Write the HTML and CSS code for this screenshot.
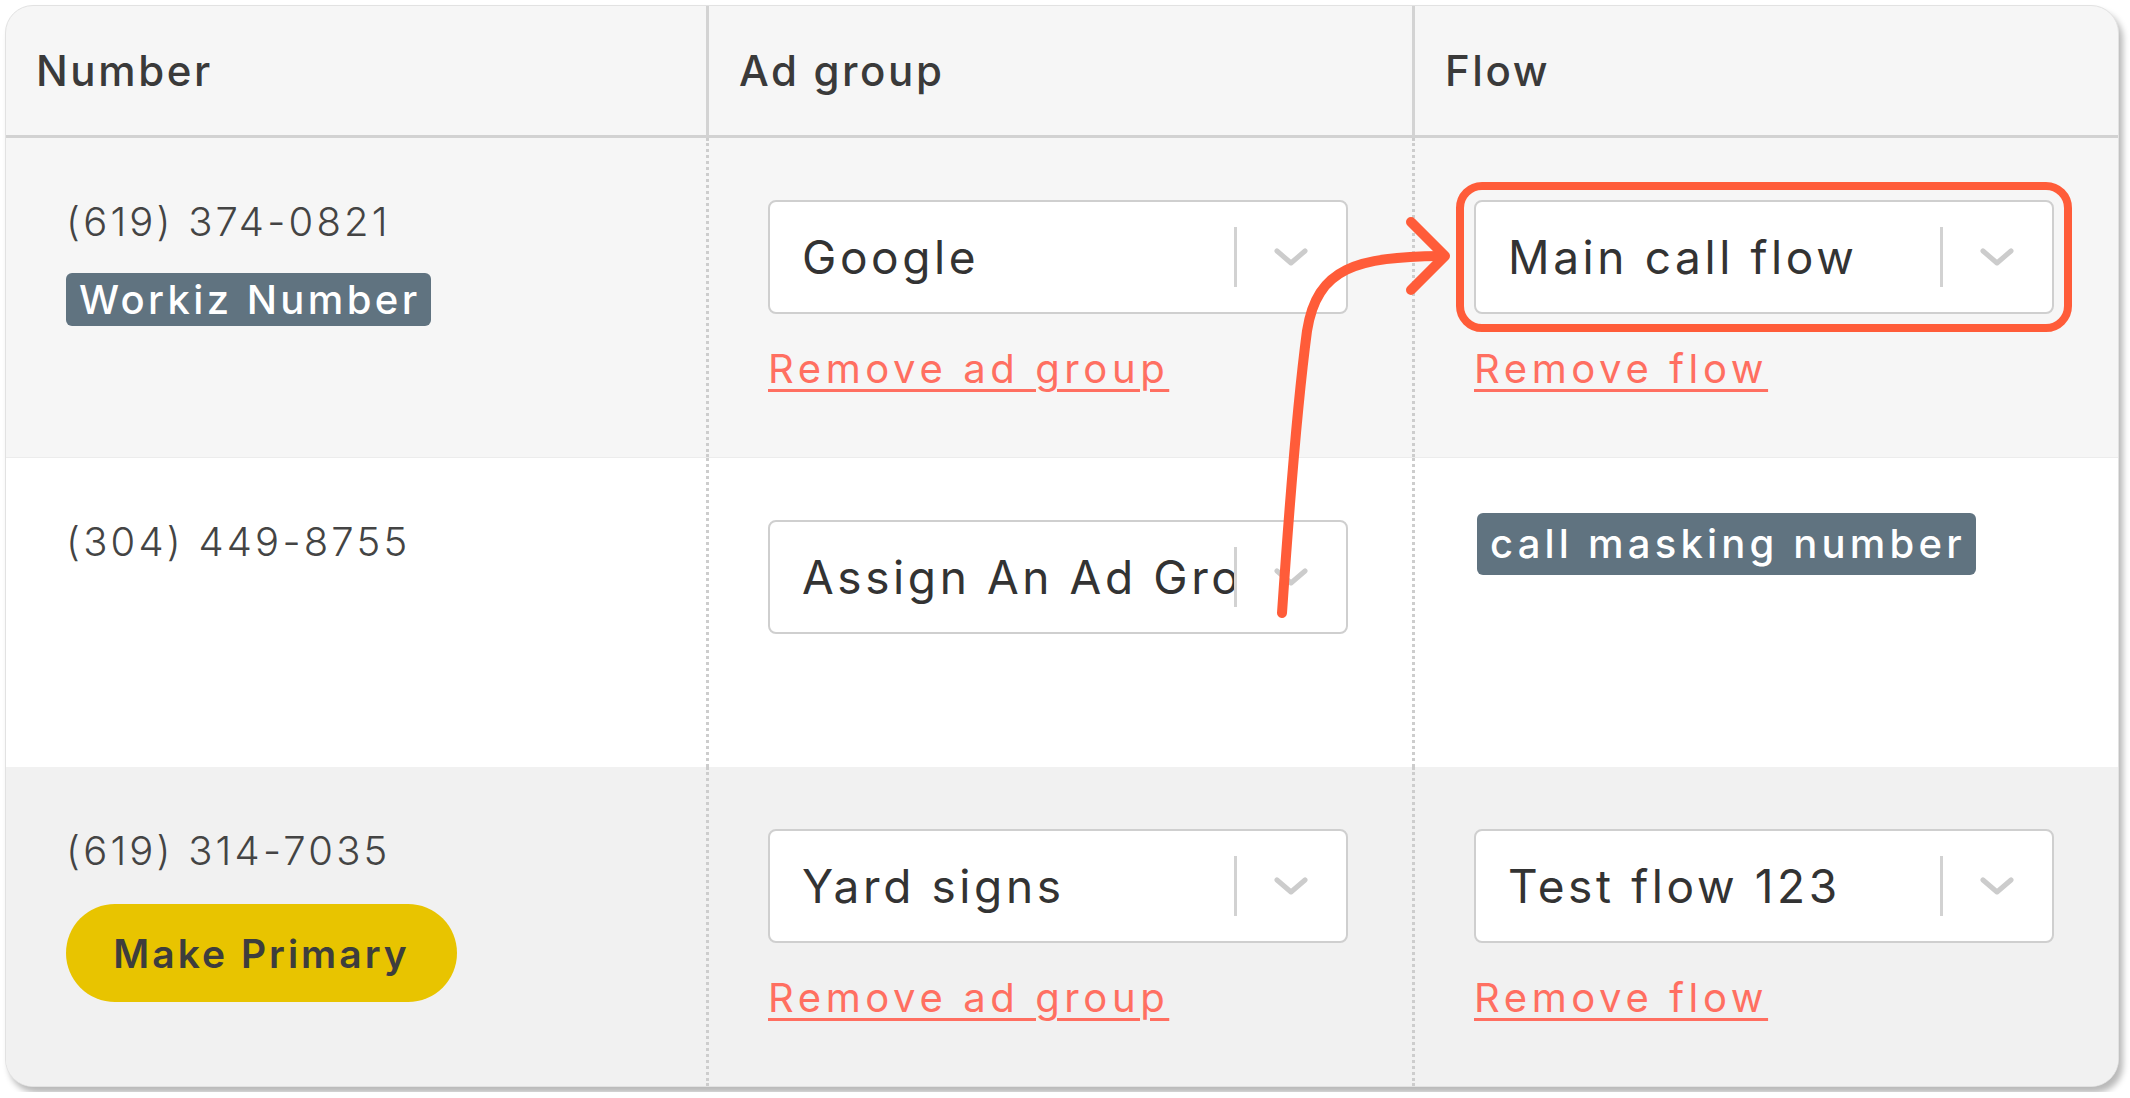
FILE: index.html
```html
<!DOCTYPE html>
<html>
<head>
    <title>Numbers - Ad groups and flows</title>
    <link rel="stylesheet" href="styles.css">
</head>
<body>
    <div class="card">
        <div class="grid head">
            <div class="th">Number</div>
            <div class="th">Ad group</div>
            <div class="th">Flow</div>
        </div>

        <div class="grid row row-light">
            <div class="cell">
                <div class="phone">(619) 374-0821</div>
                <span class="tag">Workiz Number</span>
            </div>
            <div class="cell">
                <div class="select">
                    <span class="select-value">Google</span>
                    <span class="select-sep"></span>
                    <svg class="chevron" viewBox="0 0 34 18"><path d="M3 3 L17 15 L31 3"/></svg>
                </div>
                <a class="remove-link" href="#">Remove ad group</a>
            </div>
            <div class="cell">
                <div class="select highlighted">
                    <span class="select-value">Main call flow</span>
                    <span class="select-sep"></span>
                    <svg class="chevron" viewBox="0 0 34 18"><path d="M3 3 L17 15 L31 3"/></svg>
                </div>
                <a class="remove-link" href="#">Remove flow</a>
            </div>
        </div>

        <div class="grid row row-white">
            <div class="cell">
                <div class="phone">(304) 449-8755</div>
            </div>
            <div class="cell">
                <div class="select">
                    <span class="select-value">Assign An Ad Group</span>
                    <span class="select-sep"></span>
                    <svg class="chevron" viewBox="0 0 34 18"><path d="M3 3 L17 15 L31 3"/></svg>
                </div>
            </div>
            <div class="cell">
                <span class="tag tag-large">call masking number</span>
            </div>
        </div>

        <div class="grid row row-gray">
            <div class="cell">
                <div class="phone">(619) 314-7035</div>
                <button class="primary-btn">Make Primary</button>
            </div>
            <div class="cell">
                <div class="select">
                    <span class="select-value">Yard signs</span>
                    <span class="select-sep"></span>
                    <svg class="chevron" viewBox="0 0 34 18"><path d="M3 3 L17 15 L31 3"/></svg>
                </div>
                <a class="remove-link" href="#">Remove ad group</a>
            </div>
            <div class="cell">
                <div class="select">
                    <span class="select-value">Test flow 123</span>
                    <span class="select-sep"></span>
                    <svg class="chevron" viewBox="0 0 34 18"><path d="M3 3 L17 15 L31 3"/></svg>
                </div>
                <a class="remove-link" href="#">Remove flow</a>
            </div>
        </div>

        <!-- annotation arrow drawn over the table -->
        <svg class="annotation" viewBox="5 5 2112 1080">
            <path d="M1281 612 C1290 480 1298 390 1306 330 C1316 266 1356 256 1440 255"/>
            <path d="M1410 221 L1444 255 L1410 289"/>
        </svg>
    </div>
</body>
</html>
```

FILE: styles.css
```css
body {
    margin: 0;
    background: #ffffff;
    font-family: Inter, "Noto Sans", sans-serif;
    color: #444;
}
.card {
    position: relative;
    margin: 5px;
    width: 2112px;
    border: 1px solid #e2e2e2;
    border-radius: 28px;
    overflow: hidden;
    box-shadow: 4px 6px 6px rgba(0,0,0,0.28);
    background: #f6f6f6;
}
.grid {
    display: grid;
    grid-template-columns: 700px 706px 1fr;
}
.head {
    height: 129px;
    border-bottom: 3px solid #d2d2d2;
}
.th {
    display: flex;
    align-items: center;
    padding-left: 30px;
    font-size: 42px;
    font-weight: 500;
    letter-spacing: 2.6px;
    color: #3a3a3a;
}
.th + .th {
    border-left: 3px solid #d3d3d3;
}
.row {
    min-height: 309px;
}
.row-light {
    background: #f6f6f6;
    border-bottom: 1px solid #ececec;
}
.row-white {
    background: #ffffff;
}
.row-gray {
    background: #f1f1f1;
}
.cell {
    padding: 62px 64px 60px 60px;
    display: flex;
    flex-direction: column;
    align-items: flex-start;
}
.cell + .cell {
    border-left: 3px dotted #cdcdcd;
    padding-left: 59px;
}
.phone {
    font-size: 40px;
    line-height: 44px;
    font-weight: 300;
    color: #444;
    letter-spacing: 3.2px;
}
.tag {
    margin-top: 29px;
    background: #607380;
    color: #fff;
    font-size: 40px;
    font-weight: 500;
    line-height: 53px;
    letter-spacing: 3.4px;
    padding: 0 10px 0 13px;
    border-radius: 6px;
}
.tag-large {
    margin-top: -7px;
    line-height: 62px;
    letter-spacing: 4.2px;
    padding: 0 10px 0 13px;
    margin-left: 3px;
}
.select {
    box-sizing: border-box;
    width: 100%;
    height: 114px;
    display: flex;
    align-items: center;
    background: #fff;
    border: 2px solid #cfcfcf;
    border-radius: 8px;
    padding: 0 38px 0 32px;
}
.select-value {
    flex: 1;
    overflow: hidden;
    white-space: nowrap;
    font-size: 46px;
    letter-spacing: 3.6px;
    color: #333;
}
.select-sep {
    width: 3px;
    height: 60px;
    background: #d2d2d2;
    margin-right: 37px;
}
.chevron {
    width: 34px;
    height: 18px;
    fill: none;
    stroke: #cccccc;
    stroke-width: 5;
    stroke-linecap: round;
    stroke-linejoin: round;
}
.highlighted {
    outline: 8px solid #ff5c39;
    outline-offset: 10px;
}
.remove-link {
    margin-top: 27px;
    font-size: 40px;
    line-height: 56px;
    letter-spacing: 4.6px;
    color: #ff6f61;
    text-decoration: underline;
    text-decoration-thickness: 3px;
    text-underline-offset: 6px;
}
.primary-btn {
    margin-top: 31px;
    width: 391px;
    height: 98px;
    border: none;
    border-radius: 49px;
    background: #e8c400;
    color: #3d3d3d;
    font-family: Inter, "Noto Sans", sans-serif;
    font-size: 39px;
    font-weight: 600;
    letter-spacing: 3px;
    cursor: pointer;
}
.annotation {
    position: absolute;
    left: 0;
    top: 0;
    width: 2112px;
    height: 1080px;
    pointer-events: none;
    fill: none;
    stroke: #ff5c39;
    stroke-width: 10;
    stroke-linecap: round;
    stroke-linejoin: round;
}
```
